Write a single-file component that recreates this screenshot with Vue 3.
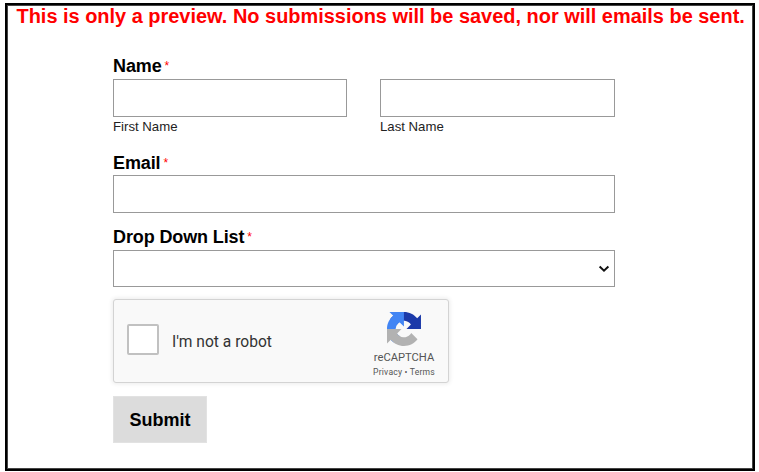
<script setup>
import { ref } from 'vue'

const firstName = ref('')
const lastName = ref('')
const email = ref('')
const choice = ref('')
</script>

<template>
  <main class="frame">
    <p class="notice">This is only a preview. No submissions will be saved, nor will emails be sent.</p>
    <form class="form" @submit.prevent>
      <div class="label"><span>Name</span><span class="req">*</span></div>
      <div class="names">
        <label class="part">
          <input v-model="firstName" class="control" type="text" />
          <span class="hint">First Name</span>
        </label>
        <label class="part">
          <input v-model="lastName" class="control" type="text" />
          <span class="hint">Last Name</span>
        </label>
      </div>

      <label class="label email-label" for="email"><span>Email</span><span class="req">*</span></label>
      <input id="email" v-model="email" class="control" type="text" />

      <label class="label list-label" for="list"><span>Drop Down List</span><span class="req">*</span></label>
      <div class="select">
        <select id="list" v-model="choice" class="control dropdown"></select>
        <svg class="chevron" width="12" height="8" viewBox="0 0 12 8"><path d="M1.6 1.6 6 5.7l4.4-4.1" /></svg>
      </div>

      <div class="captcha">
        <div class="box"></div>
        <span class="robot">I'm not a robot</span>
        <div class="brand">
          <svg class="logo" viewBox="0 0 64 64">
            <path fill="#1c3aa9" d="M64 31.955l-.033-1.37V4.687l-7.16 7.16C50.948 4.674 42.033.093 32.05.093c-10.4 0-19.622 4.96-25.458 12.64l11.736 11.86a15.55 15.55 0 0 1 4.754-5.334c2.05-1.6 4.952-2.906 8.968-2.906.485 0 .86.057 1.135.163 4.976.393 9.288 3.14 11.828 7.124l-8.307 8.307L64 31.953" />
            <path fill="#4285f4" d="M31.862.094l-1.37.033H4.594l7.16 7.16C4.58 13.147 0 22.06 0 32.046c0 10.4 4.96 19.622 12.64 25.458L24.5 45.768a15.55 15.55 0 0 1-5.334-4.754c-1.6-2.05-2.906-4.952-2.906-8.968 0-.485.057-.86.163-1.135.393-4.976 3.14-9.288 7.124-11.828l8.307 8.307L31.86.095" />
            <path fill="#b2b2b2" d="M.001 32.045l.033 1.37v25.898l7.16-7.16c5.86 7.173 14.774 11.754 24.76 11.754 10.4 0 19.622-4.96 25.458-12.64l-11.736-11.86a15.55 15.55 0 0 1-4.754 5.334c-2.05 1.6-4.952 2.906-8.968 2.906-.485 0-.86-.057-1.135-.163-4.976-.393-9.288-3.14-11.828-7.124l8.307-8.307c-10.522.04-22.4.066-27.295-.005" />
          </svg>
          <span class="title">reCAPTCHA</span>
          <span class="links">Privacy • Terms</span>
        </div>
      </div>

      <button class="submit" type="submit">Submit</button>
    </form>
  </main>
</template>

<style>
body {
  background: #fff;
}
</style>

<style scoped>
.frame {
  box-sizing: border-box;
  width: 750px;
  height: 468px;
  margin: 3px 0 0 5px;
  border: 2px solid #000;
  box-shadow: inset 0 0 0 1px #444;
  font-family: "Liberation Sans", Arial, sans-serif;
  color: #000;
  display: flow-root;
}
.notice {
  margin: 0 0 0 9.5px;
  height: 24px;
  line-height: 23px;
  font-size: 19.96px;
  font-weight: 700;
  color: #f00;
  white-space: nowrap;
}
.form {
  width: 502px;
  margin: 25px 0 0 106px;
  display: flex;
  flex-direction: column;
}
.label {
  display: flex;
  align-items: center;
  height: 25px;
  line-height: 25px;
  font-size: 18px;
  letter-spacing: -0.12px;
  font-weight: 700;
}
.req {
  margin-left: 3px;
  font-size: 12px;
  font-weight: 400;
  color: #f00;
}
.names {
  display: grid;
  grid-template-columns: 234px 235px;
  gap: 33px;
}
.part {
  display: flex;
  flex-direction: column;
}
.control {
  box-sizing: border-box;
  width: 100%;
  height: 38px;
  margin: 0;
  padding: 0 8px;
  border: 1px solid #999;
  border-radius: 0;
  background: #fff;
  font: inherit;
  outline: none;
}
.hint {
  height: 18px;
  line-height: 19px;
  font-size: 13.2px;
  color: #222;
}
.email-label {
  height: 26px;
  line-height: 26px;
  margin-top: 14px;
  padding-top: 1px;
  box-sizing: border-box;
}
.list-label {
  margin-top: 12px;
}
.select {
  display: grid;
  align-items: center;
}
.dropdown {
  grid-area: 1 / 1;
  height: 37px;
  appearance: none;
}
.chevron {
  grid-area: 1 / 1;
  justify-self: end;
  margin-right: 5px;
  pointer-events: none;
  fill: none;
  stroke: #111;
  stroke-width: 2;
}
.captcha {
  box-sizing: border-box;
  display: flex;
  align-items: center;
  width: 336px;
  height: 84px;
  margin-top: 12px;
  padding: 0 13px;
  border: 1px solid #d3d3d3;
  border-radius: 3px;
  background: #f9f9f9;
  box-shadow: 0 0 4px 1px rgba(0, 0, 0, 0.08);
  font-family: Roboto, sans-serif;
}
.box {
  box-sizing: border-box;
  width: 32px;
  height: 31px;
  margin-top: -4px;
  border: 2px solid #c1c1c1;
  border-radius: 2px;
  background: #fff;
}
.robot {
  margin-left: 13px;
  padding-top: 1px;
  font-size: 15.6px;
  color: #333;
}
.brand {
  display: flex;
  flex-direction: column;
  align-items: center;
  align-self: flex-start;
  margin: 12px 0 0 auto;
  color: #555;
}
.logo {
  width: 34px;
  height: 34px;
}
.title {
  margin-top: 4px;
  font-size: 11.2px;
  line-height: 15px;
}
.links {
  font-size: 8.6px;
  letter-spacing: 0.2px;
  line-height: 15px;
}
.submit {
  width: 94px;
  height: 47px;
  margin: 13px 0 0;
  padding: 1px 0 0;
  border: 1px solid #e2e2e2;
  background: #dcdcdc;
  font: 700 18px "Liberation Sans", Arial, sans-serif;
  color: #000;
}
</style>
